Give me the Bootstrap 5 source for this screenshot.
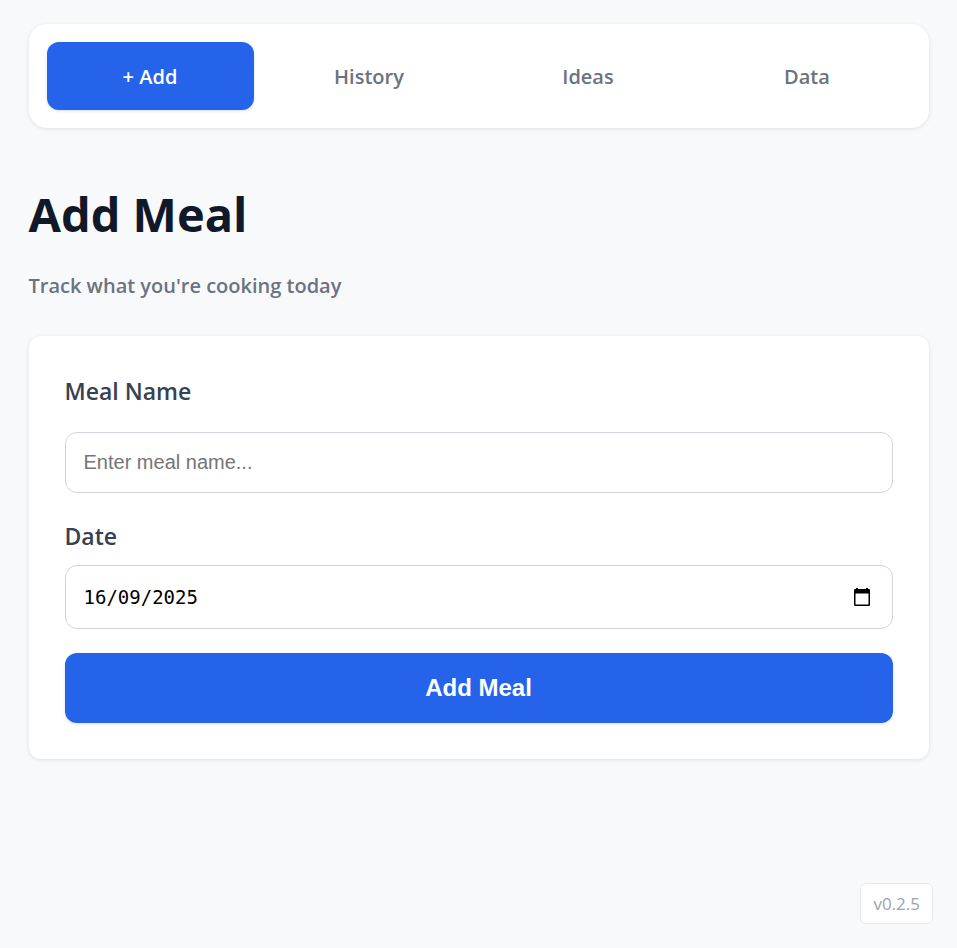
<!DOCTYPE html>
<html lang="en-GB">
<head>
<meta charset="utf-8">
<meta name="viewport" content="width=device-width, initial-scale=1">
<title>Add Meal</title>
<link href="https://cdn.jsdelivr.net/npm/bootstrap@5.3.0/dist/css/bootstrap.min.css" rel="stylesheet">
<style>
  body { background: #f8f9fb; font-family: "Segoe UI", "Open Sans", "Noto Sans", sans-serif; color: #111827; }
  .page-wrap { max-width: 900px; padding-top: 24px; padding-bottom: 72px; }
  .panel { background: #fff; box-shadow: 0 1px 4px rgba(0, 0, 0, .1); }
  .tab-bar { padding: 18px; gap: 12px; border-radius: 18px; margin-bottom: 50px; }
  .tab-bar .nav-link { padding: 17px 8px 15px; line-height: 36px; font-size: 20px; font-weight: 600; color: #6b7280; border-radius: 12px; }
  .tab-bar .nav-link.active { background: #2563eb; color: #fff; box-shadow: 0 1px 3px rgba(37, 99, 235, .2); }
  .page-title { font-size: 47px; font-weight: 700; line-height: 72px; margin-bottom: 18px; }
  .page-note { font-size: 20px; font-weight: 600; line-height: 36px; color: #6b7280; margin-bottom: 32px; }
  .meal-form { padding: 36px; border-radius: 12px; }
  .meal-form .form-label { display: block; font-size: 23px; font-weight: 600; line-height: 38px; color: #374151; margin-bottom: 10px; }
  .meal-form .name-label { margin-bottom: 22px; }
  .field-box { border: 1px solid #d1d5db; border-radius: 12px; background: #fff; }
  .meal-form .form-control { font-size: 20px; padding: 17px 18px; color: #000; font-family: "Liberation Sans", Arial, sans-serif; line-height: 25px; }
  .meal-form .form-control::placeholder { color: #757575; }
  .meal-form .date-control { font-family: "DejaVu Sans Mono", monospace; font-size: 19px; line-height: 28px; }
  .date-btn { padding: 0 20px 0 8px; line-height: 1; color: #000; }
  .submit-btn { background: #2563eb; color: #fff; font-family: "Liberation Sans", Arial, sans-serif; font-size: 24px; font-weight: 700; line-height: 34px; padding: 18px; border: 0; border-radius: 12px; box-shadow: 0 1px 3px rgba(37, 99, 235, .2); }
  .submit-btn:hover { background: #1d4ed8; color: #fff; }
  .version-tag { margin: 24px; padding: 6px 12px; font-size: 17px; line-height: 27px; color: #9ca3af; background: #fff; border: 1px solid #e5e7eb; border-radius: 6px; }
</style>
</head>
<body>
<div class="container page-wrap px-0">
  <nav class="nav nav-justified flex-nowrap panel tab-bar" aria-label="Main">
    <a class="nav-link active" href="#add" aria-current="page">+ Add</a>
    <a class="nav-link" href="#history">History</a>
    <a class="nav-link" href="#ideas">Ideas</a>
    <a class="nav-link" href="#data">Data</a>
  </nav>
  <main>
    <h1 class="page-title">Add Meal</h1>
    <p class="page-note">Track what you're cooking today</p>
    <form class="panel meal-form">
      <div class="mb-4">
        <label class="form-label name-label" for="meal-name">Meal Name</label>
        <input class="form-control field-box" id="meal-name" type="text" placeholder="Enter meal name...">
      </div>
      <div class="mb-4">
        <label class="form-label" for="meal-date">Date</label>
        <div class="field-box d-flex align-items-center">
          <input class="form-control date-control border-0 bg-transparent" id="meal-date" type="text" inputmode="numeric" value="16/09/2025">
          <button class="btn border-0 date-btn" type="button" aria-label="Choose date">
            <svg width="20" height="20" viewBox="0 0 20 20" fill="currentColor" aria-hidden="true"><path fill-rule="evenodd" d="M4 1h2v1h8V1h2v1h1q1 0 1 1v15q0 1-1 1H3q-1 0-1-1V3q0-1 1-1h1zM3.500 6.500v11h13v-11z"/></svg>
          </button>
        </div>
      </div>
      <button class="btn submit-btn w-100" type="submit">Add Meal</button>
    </form>
  </main>
</div>
<div class="version-tag position-fixed bottom-0 end-0">v0.2.5</div>
<script src="https://cdn.jsdelivr.net/npm/bootstrap@5.3.0/dist/js/bootstrap.bundle.min.js"></script>
</body>
</html>
